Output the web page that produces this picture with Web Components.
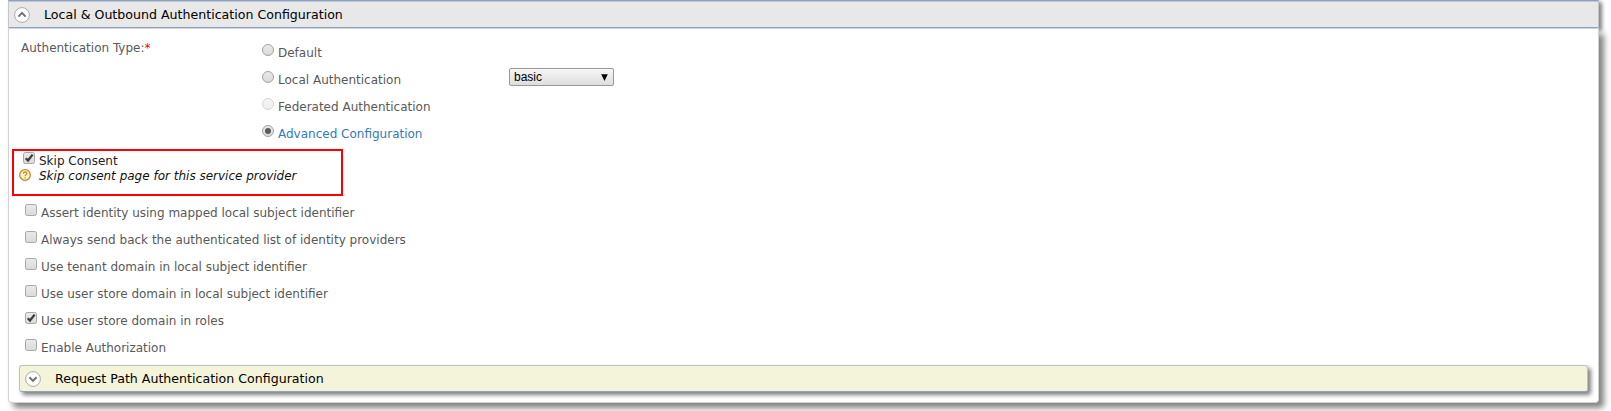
<!DOCTYPE html>
<html lang="en"><head><meta charset="utf-8"><title>Service Provider</title>
<style>html,body{margin:0;background:#fff}body{height:411px;overflow:hidden;font:12px/16px "DejaVu Sans",sans-serif;color:#595959}</style></head>
<body>
<config-panel>
<section-header slot="header">Local &amp; Outbound Authentication Configuration</section-header>
<auth-types>
<option-row kind="radio">Default</option-row>
<option-row kind="radio">Local Authentication<select-box slot="extra">basic</select-box></option-row>
<option-row kind="radio" disabled>Federated Authentication</option-row>
<option-row kind="radio" checked style="color:#337ab7">Advanced Configuration</option-row>
</auth-types>
<consent-box><option-row kind="check" checked>Skip Consent</option-row><help-text slot="help">Skip consent page for this service provider</help-text></consent-box>
<check-list>
<option-row kind="check">Assert identity using mapped local subject identifier</option-row>
<option-row kind="check">Always send back the authenticated list of identity providers</option-row>
<option-row kind="check">Use tenant domain in local subject identifier</option-row>
<option-row kind="check">Use user store domain in local subject identifier</option-row>
<option-row kind="check" checked>Use user store domain in roles</option-row>
<option-row kind="check">Enable Authorization</option-row>
</check-list>
<section-header collapsed>Request Path Authentication Configuration</section-header>
</config-panel>
<script>
function define(name, render){
  customElements.define(name, class extends HTMLElement{
    constructor(){super();this.attachShadow({mode:'open'});}
    connectedCallback(){this.shadowRoot.innerHTML=render(this);}
  });
}
define('config-panel',()=>`<style>
:host{display:flex;flex-direction:column;width:1591px;height:403px;margin-left:8px}
.body{flex:1;box-sizing:border-box;border:solid #d2d2d2;border-width:0 1px 1px;border-radius:0 0 4px 4px;background:#fff;box-shadow:5px 5px 6px #808080}
</style><slot name="header"></slot><div class="body"><slot></slot></div>`);
define('section-header',el=>{
const c=el.hasAttribute('collapsed');
return `<style>
:host{display:flex;flex:none;align-items:center;box-sizing:border-box;height:29px;color:#000;font-size:12.6px;background:#e8e8e8;border:solid #c4c6ca;border-width:1px;border-top-color:#87a3cd;border-bottom-color:#d5d9df;box-shadow:inset 0 1px #c6c6c6,inset 0 -1px #8ca3c4,3px 2px 4px #808080;padding-left:5px}
:host([collapsed]){height:27px;width:1569px;margin-left:10px;padding-left:5px;background:#f4f4da;border:1px solid #c0c1bd;border-bottom-color:#8da2c2;border-radius:3px;box-shadow:3px 3px 4px #808080}
svg{width:16px;height:16px;flex:none;margin-right:14px}
span{white-space:nowrap}
</style><svg viewBox="0 0 16 16"><circle cx="8" cy="8" r="7.4" fill="#fff" stroke="#aaa"/><path d="${c?'M4.4 6.2 8 9.9 11.6 6.2':'M4.4 9.6 8 5.9 11.6 9.6'}" fill="none" stroke="#707070" stroke-width="2"/></svg><span><slot></slot></span>`});
define('auth-types',()=>`<style>
:host{display:flex;height:120px;padding-left:12px}
.label{width:240px;padding-top:11px}b{color:red;font-weight:400}
.opts{padding-top:12px}
</style><div class="label">Authentication Type:<b>*</b></div><div class="opts"><slot></slot></div>`);
define('option-row',el=>{
const r=el.getAttribute('kind')==='radio',on=el.hasAttribute('checked'),d=el.hasAttribute('disabled');
return `<style>
:host{display:flex;height:27px}
svg{width:12px;height:12px;flex:none;margin:3px 4px 0 1px;opacity:${d?.45:1}}
.t{padding-top:4px;white-space:nowrap;width:${r?'231px':'auto'}}
</style><svg viewBox="0 0 12 12"><defs><linearGradient id="g" x2="0" y2="1"><stop stop-color="#eaeaea"/><stop offset="1" stop-color="#dadada"/></linearGradient></defs>
${r?'<circle cx="6" cy="6" r="5.5" fill="url(#g)" stroke="#a2a2a2"/>':'<rect x=".5" y=".5" width="11" height="11" rx="1.8" fill="url(#g)" stroke="#a8a8a8"/>'}
${on?(r?'<circle cx="6" cy="6" r="3" fill="#5a5a5a"/>':'<path d="M2.7 6.2 5 8.5 9.6 2.6" fill="none" stroke="#3c3c3c" stroke-width="2.3"/>'):''}</svg><span class="t"><slot></slot></span><slot name="extra"></slot>`});
define('select-box',()=>`<style>
:host{display:flex;box-sizing:border-box;width:105px;height:18px;border:1px solid #999;border-radius:2px;background:linear-gradient(#f6f6f6,#dedede);color:#000;font:12px/16px "Liberation Sans",sans-serif;padding:0 5px 0 4px;align-items:center;justify-content:space-between}
svg{width:7px;height:7px}
</style><span><slot></slot></span><svg viewBox="0 0 7 7"><path d="M.2 .2H6.8L3.5 7Z"/></svg>`);
define('consent-box',()=>`<style>
:host{display:block;box-sizing:border-box;width:331px;height:47px;margin-left:3px;border:2px solid red;color:#222;padding-left:8px}
.row{height:16px;margin-top:-2px}.help{margin:1px 0 0 -4px}
</style><div class="row"><slot></slot></div><div class="help"><slot name="help"></slot></div>`);
define('help-text',()=>`<style>
:host{display:flex;font-style:italic;color:#111}
svg{width:12px;height:12px;margin:3px 8px 0 1px;flex:none}span{padding-top:2px;white-space:nowrap}
</style><svg viewBox="0 0 12 12"><circle cx="6" cy="6" r="5.3" fill="#fff6cf" stroke="#ba8b24" stroke-width="1.3"/><path d="M4.2 4.7Q4.3 3 6 3T7.8 4.5Q7.8 5.4 6.7 6 6 6.4 6 7.3M6 8.2V9.4" fill="none" stroke="#d28b20" stroke-width="1.3"/></svg><span><slot></slot></span>`);
define('check-list',()=>`<style>:host{display:block;height:169px;box-sizing:border-box;padding:5px 0 0 15px}</style><slot></slot>`);
</script>
</body></html>
